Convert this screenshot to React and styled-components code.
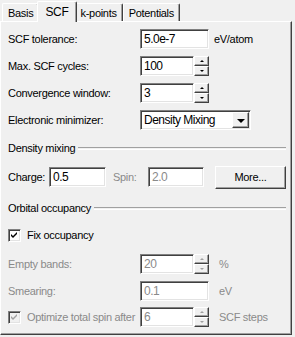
import React from 'react'
import styled, { createGlobalStyle } from 'styled-components'

const GlobalStyle = createGlobalStyle`
    body {
        margin: 0;
        background: #f0f0f0;
        font-family: "Liberation Sans", Arial, sans-serif;
        font-size: 11px;
        letter-spacing: -0.3px;
        color: #000;
    }
`;

const Window = styled.div`
    width: 295px;
    height: 337px;
    background: #f0f0f0;
    display: flex;
    flex-direction: column;
    overflow: hidden;
`;

const TabBar = styled.div`
    display: flex;
    align-items: flex-end;
    height: 21px;
    padding-left: 2px;
`;

const Tab = styled.div`
    position: relative;
    height: ${p => (p.$active ? '21px' : '18px')};
    padding: 0 ${p => (p.$active ? '7px' : '5px')};
    margin: 0 ${p => (p.$active ? '-2px' : '0')};
    z-index: ${p => (p.$active ? 2 : 1)};
    display: flex;
    align-items: center;
    box-sizing: border-box;
    font-size: ${p => (p.$active ? '12px' : '11px')};
    background: #f0f0f0;
    border-top: 1px solid #fff;
    border-left: 1px solid #fff;
    border-right: 1px solid #404040;
    box-shadow: inset -1px 0 #a0a0a0;
    border-radius: 2px 2px 0 0;
    margin-bottom: ${p => (p.$active ? '-1px' : '0')};
`;

const Panel = styled.div`
    width: 292px;
    height: 314px;
    box-sizing: border-box;
    border-top: 1px solid #fff;
    border-left: 1px solid #fff;
    border-right: 1px solid #404040;
    border-bottom: 1px solid #404040;
    box-shadow: inset -1px -1px #a0a0a0;
    padding: 7px 4px 0 7px;
    display: flex;
    flex-direction: column;
`;

const Row = styled.div`
    display: flex;
    align-items: center;
    height: 20px;
    margin-top: ${p => p.$gap ?? 7}px;
`;

const Label = styled.div`
    width: ${p => p.$w ?? 132}px;
    flex: none;
    color: ${p => (p.$disabled ? '#8a8a8a' : '#000')};
    white-space: nowrap;
    overflow: hidden;
`;

const Unit = styled.div`
    margin-left: ${p => p.$ml ?? 5}px;
    color: ${p => (p.$disabled ? '#8a8a8a' : '#000')};
`;

const Input = styled.div`
    width: ${p => p.$w}px;
    height: 20px;
    box-sizing: border-box;
    background: #fff;
    border: 1px solid;
    border-color: #808080 #fff #fff #808080;
    box-shadow: inset 1px 1px #404040, inset -1px -1px #e3e3e3;
    padding: 0 3px;
    display: flex;
    align-items: center;
    flex: none;
    color: ${p => (p.$disabled ? '#8a8a8a' : '#000')};
    font-size: 12px;
    letter-spacing: -0.5px;
`;

const Spinner = styled.div`
    display: flex;
    flex-direction: column;
    width: 15px;
    height: 20px;
    flex: none;
`;

const SpinButton = styled.div`
    flex: 1;
    box-sizing: border-box;
    background: #f0f0f0;
    border: 1px solid;
    border-color: #fff #404040 #404040 #fff;
    box-shadow: inset -1px -1px #a0a0a0;
    display: flex;
    align-items: center;
    justify-content: center;
    &::after {
        content: '';
        width: 0;
        height: 0;
        border-left: 2px solid transparent;
        border-right: 2px solid transparent;
        ${p => (p.$down ? 'border-top' : 'border-bottom')}: 2px solid ${p => (p.$disabled ? '#a0a0a0' : '#000')};
    }
`;

const Combo = styled(Input)`
    padding-right: 1px;
    justify-content: space-between;
`;

const ComboButton = styled.div`
    width: 17px;
    height: 16px;
    box-sizing: border-box;
    background: #f0f0f0;
    border: 1px solid;
    border-color: #fff #404040 #404040 #fff;
    box-shadow: inset -1px -1px #a0a0a0;
    display: flex;
    align-items: center;
    justify-content: center;
    &::after {
        content: '';
        border-left: 4px solid transparent;
        border-right: 4px solid transparent;
        border-top: 4px solid #000;
        margin-top: 1px;
    }
`;

const GroupHeader = styled.div`
    display: flex;
    align-items: center;
    height: 14px;
    margin-top: ${p => p.$mt}px;
    gap: 3px;
    &::after {
        content: '';
        flex: 1;
        height: 1px;
        border-top: 1px solid #a0a0a0;
        border-bottom: 1px solid #fff;
        margin-right: 1px;
    }
`;

const Button = styled.div`
    width: 71px;
    height: 23px;
    box-sizing: border-box;
    margin-left: auto;
    margin-right: 1px;
    background: #f0f0f0;
    border: 1px solid;
    border-color: #fff #404040 #404040 #fff;
    box-shadow: inset -1px -1px #a0a0a0;
    display: flex;
    align-items: center;
    justify-content: center;
`;

const CheckRow = styled.div`
    display: flex;
    align-items: center;
    gap: 6px;
    height: 14px;
`;

const Box = styled.div`
    width: 13px;
    height: 13px;
    box-sizing: border-box;
    flex: none;
    background: ${p => (p.$disabled ? '#f0f0f0' : '#fff')};
    border: 1px solid;
    border-color: #808080 #fff #fff #808080;
    box-shadow: inset 1px 1px #404040, inset -1px -1px #e3e3e3;
    display: flex;
    align-items: center;
    justify-content: center;
`;

const Check = ({ color }) => (
    <svg width="7" height="7" viewBox="0 0 7 7">
        <path d="M0 2 L2 4 L6 0 L6 2 L2 6 L0 4 Z" fill={color} />
    </svg>
)

const SpinField = ({ value, disabled }) => (
    <>
        <Input $w={54} $disabled={disabled}>{value}</Input>
        <Spinner>
            <SpinButton $disabled={disabled} />
            <SpinButton $down $disabled={disabled} />
        </Spinner>
    </>
)

export default function App() {
    return (
        <Window>
            <GlobalStyle />
            <TabBar>
                <Tab>Basis</Tab>
                <Tab $active>SCF</Tab>
                <Tab>k-points</Tab>
                <Tab>Potentials</Tab>
            </TabBar>
            <Panel>
                <Row $gap={0}>
                    <Label>SCF tolerance:</Label>
                    <Input $w={69}>5.0e-7</Input>
                    <Unit>eV/atom</Unit>
                </Row>
                <Row>
                    <Label>Max. SCF cycles:</Label>
                    <SpinField value="100" />
                </Row>
                <Row>
                    <Label>Convergence window:</Label>
                    <SpinField value="3" />
                </Row>
                <Row>
                    <Label>Electronic minimizer:</Label>
                    <Combo $w={111}>
                        Density Mixing
                        <ComboButton />
                    </Combo>
                </Row>

                <GroupHeader $mt={11}>Density mixing</GroupHeader>
                <Row $gap={12}>
                    <Label $w={41}>Charge:</Label>
                    <Input $w={57}>0.5</Input>
                    <Label $w={35} $disabled style={{ paddingLeft: 7 }}>Spin:</Label>
                    <Input $w={56} $disabled>2.0</Input>
                    <Button>More...</Button>
                </Row>

                <GroupHeader $mt={14}>Orbital occupancy</GroupHeader>
                <CheckRow style={{ marginTop: 13 }}>
                    <Box><Check color="#000" /></Box>
                    <span>Fix occupancy</span>
                </CheckRow>

                <Row $gap={12}>
                    <Label $disabled>Empty bands:</Label>
                    <SpinField value="20" disabled />
                    <Unit $ml={10} $disabled>%</Unit>
                </Row>
                <Row>
                    <Label $disabled>Smearing:</Label>
                    <Input $w={69} $disabled>0.1</Input>
                    <Unit $ml={10} $disabled>eV</Unit>
                </Row>
                <Row $gap={6}>
                    <Label $disabled>
                        <CheckRow>
                            <Box $disabled><Check color="#a0a0a0" /></Box>
                            <span>Optimize total spin after</span>
                        </CheckRow>
                    </Label>
                    <SpinField value="6" disabled />
                    <Unit $ml={10} $disabled>SCF steps</Unit>
                </Row>
            </Panel>
        </Window>
    )
}
